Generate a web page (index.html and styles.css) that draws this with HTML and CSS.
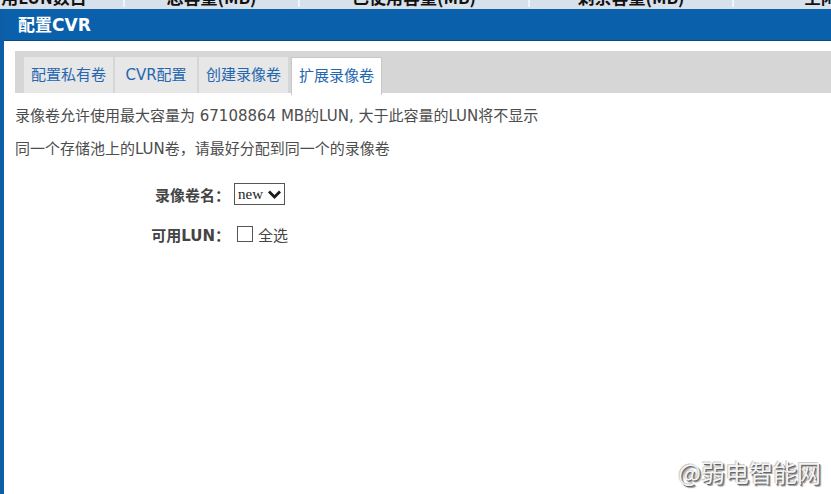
FILE: index.html
```html
<!DOCTYPE html>
<html lang="zh-CN">
<head>
    <meta charset="UTF-8">
    <title>配置CVR</title>
    <link rel="stylesheet" href="styles.css">
</head>
<body>
    <!-- 背后的LUN列表表头，只露出底部 -->
    <div class="under-table">
        <div class="under-row">
            <div class="under-cell c1">可用LUN数目</div>
            <div class="under-cell c2">总容量(MB)</div>
            <div class="under-cell c3">已使用容量(MB)</div>
            <div class="under-cell c4">剩余容量(MB)</div>
            <div class="under-cell c5">空闲容量(MB)</div>
        </div>
    </div>

    <div class="modal">
        <div class="modal-title">配置CVR</div>
        <div class="modal-body">
            <div class="tabs">
                <a class="tab">配置私有卷</a>
                <a class="tab">CVR配置</a>
                <a class="tab">创建录像卷</a>
                <a class="tab active">扩展录像卷</a>
            </div>

            <p class="tip">录像卷允许使用最大容量为 67108864 MB的LUN, 大于此容量的LUN将不显示</p>
            <p class="tip">同一个存储池上的LUN卷，请最好分配到同一个的录像卷</p>

            <div class="form">
                <div class="form-row">
                    <label class="form-label">录像卷名：</label>
                    <span class="select">
                        <span class="select-value">new</span>
                        <svg width="15" height="11" viewBox="0 0 15 11"><path d="M2 2.5 L7.5 8 L13 2.5" fill="none" stroke="#1a1a1a" stroke-width="2.8"/></svg>
                    </span>
                </div>
                <div class="form-row">
                    <label class="form-label">可用LUN：</label>
                    <span class="checkbox"></span>
                    <span class="check-text">全选</span>
                </div>
            </div>
        </div>
    </div>

    <div class="watermark">@弱电智能网</div>
</body>
</html>
```

FILE: styles.css
```css
body {
    margin: 0;
    width: 831px;
    height: 494px;
    overflow: hidden;
    position: relative;
    font-family: "DejaVu Sans", "Noto Sans CJK SC", sans-serif;
    background-color: #fff;
}
.under-table {
    height: 9px;
    overflow: hidden;
    background-color: #d8e0e9;
}
.under-row {
    display: flex;
    margin-top: -14px;
    margin-left: -52px;
}
.under-cell {
    height: 21px;
    line-height: 21px;
    text-align: center;
    font-family: "Noto Sans CJK SC", sans-serif;
    font-size: 17px;
    font-weight: bold;
    color: #111;
    border-right: 2px solid #f2f5f8;
    box-sizing: border-box;
    flex-shrink: 0;
}
.c1 { width: 177px; }
.c2 { width: 175px; }
.c3 { width: 230px; }
.c4 { width: 204px; }
.c5 { width: 204px; text-align: left; padding-left: 70px; }
.modal {
    border-left: 4px solid #0c5ea6;
    height: 485px;
}
.modal-title {
    background-color: #0b60ac;
    border-bottom: 1px solid #0a4a80;
    height: 31px;
    line-height: 32px;
    padding-left: 14px;
    color: #fff;
    font-size: 17px;
    font-weight: bold;
}
.modal-body {
    padding: 10px 0 0 11px;
}
.tabs {
    display: flex;
    gap: 2px;
    height: 36px;
    padding: 6px 0 0 9px;
    background-color: #d6d6d6;
}
.tab {
    min-width: 82px;
    box-sizing: border-box;
    text-align: center;
    height: 36px;
    line-height: 36px;
    padding: 0 7px;
    font-size: 15px;
    color: #2466b0;
    background-color: #e7e7e7;
}
.tab.active {
    background-color: #fff;
    border: 1px solid #c8c8c8;
    border-bottom: none;
    height: 38px;
    line-height: 36px;
    margin-left: 1px;
    margin-bottom: -2px;
}
.tip {
    margin: 0;
    font-size: 15px;
    line-height: 33px;
    color: #4d4d4d;
}
.tip:first-of-type {
    margin-top: 7px;
}
.form {
    margin-top: 8px;
}
.form-row {
    display: flex;
    align-items: center;
    height: 40px;
}
.form-label {
    width: 215px;
    text-align: right;
    font-size: 15px;
    font-weight: bold;
    color: #444;
}
.select {
    display: flex;
    align-items: center;
    gap: 4px;
    height: 20px;
    margin-left: 4px;
    padding: 0 2px 0 3px;
    border: 1px solid #555;
}
.select-value {
    font-family: "Liberation Serif", serif;
    font-size: 15px;
    color: #222;
}
.checkbox {
    width: 14px;
    height: 14px;
    margin-left: 7px;
    border: 1px solid #555;
    background-color: #fff;
}
.check-text {
    margin-left: 5px;
    font-size: 15px;
    color: #444;
}
.watermark {
    position: absolute;
    right: 10px;
    bottom: 5px;
    font-family: "Noto Sans CJK SC", sans-serif;
    font-size: 24px;
    color: #f4f4f4;
    text-shadow: 1px 1px 0 #666, 2px 2px 1px #999, -1px -1px 0 #ccc;
}
```
